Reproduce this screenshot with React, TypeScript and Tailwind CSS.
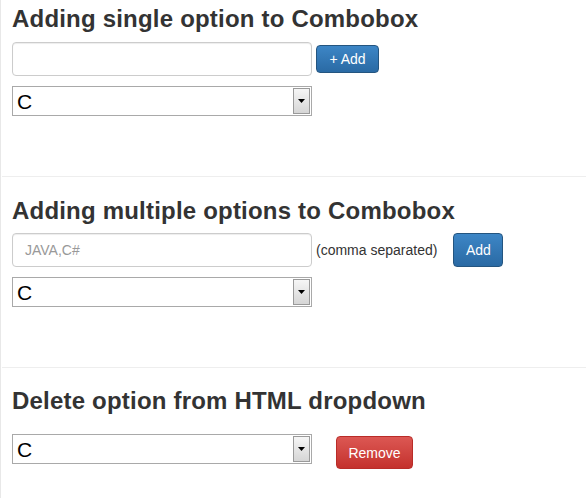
import React from "react";

function FakeSelect() {
  return (
    <div className="flex h-[30px] w-[300px] items-stretch border border-[#a9a9a9] bg-white">
      <div className="flex flex-1 items-center pl-[4px] text-[21px] leading-none text-black">C</div>
      <div className="m-[1px] flex w-[17px] items-center justify-center border border-[#9a9a9a] bg-gradient-to-b from-[#f6f6f6] to-[#d6d6d6]">
        <svg width="7" height="4" viewBox="0 0 7 4">
          <polygon points="0,0 7,0 3.5,4" fill="#000" />
        </svg>
      </div>
    </div>
  );
}

export default function App() {
  return (
    <div className="min-h-[498px] w-[586px] border-l border-[#e8e8e8] bg-white pl-[1px] font-['Liberation_Sans',Arial,sans-serif] text-[#333]">
      {/* Section 1 */}
      <section className="pl-[10px] pt-[6px] pb-[60px]">
        <h3 className="text-[24px] font-bold leading-[26px] tracking-[0.2px]">Adding single option to Combobox</h3>
        <div className="mt-[10px] flex items-center gap-[4px]">
          <div className="h-[34px] w-[300px] rounded-[4px] border border-[#ccc] bg-white shadow-[inset_0_1px_1px_rgba(0,0,0,0.075)]" />
          <button className="h-[28px] w-[63px] rounded-[4px] border border-[#245580] bg-gradient-to-b from-[#3d86c6] to-[#2a6aa4] text-[14px] leading-none text-white">
            + Add
          </button>
        </div>
        <div className="mt-[10px]">
          <FakeSelect />
        </div>
      </section>
      <hr className="border-0 border-t border-[#eee]" />

      {/* Section 2 */}
      <section className="pl-[10px] pt-[21px] pb-[60px]">
        <h3 className="text-[24px] font-bold leading-[26px] tracking-[0.2px]">Adding multiple options to Combobox</h3>
        <div className="mt-[9px] flex items-center">
          <div className="flex h-[34px] w-[300px] items-center rounded-[4px] border border-[#ccc] bg-white px-[12px] text-[14px] text-[#999] shadow-[inset_0_1px_1px_rgba(0,0,0,0.075)]">
            JAVA,C#
          </div>
          <span className="ml-[4px] text-[14px]">(comma separated)</span>
          <button className="ml-[16px] h-[34px] w-[50px] rounded-[4px] border border-[#245580] bg-gradient-to-b from-[#3d86c6] to-[#2a6aa4] text-[14px] leading-none text-white">
            Add
          </button>
        </div>
        <div className="mt-[10px]">
          <FakeSelect />
        </div>
      </section>
      <hr className="border-0 border-t border-[#eee]" />

      {/* Section 3 */}
      <section className="pl-[10px] pt-[20px]">
        <h3 className="text-[24px] font-bold leading-[26px] tracking-[0.2px]">Delete option from HTML dropdown</h3>
        <div className="mt-[20px] flex items-start">
          <FakeSelect />
          <button className="ml-[24px] mt-[2px] h-[33px] w-[77px] rounded-[4px] border border-[#b92c28] bg-gradient-to-b from-[#dc5753] to-[#c4302c] text-[14px] leading-none text-white">
            Remove
          </button>
        </div>
      </section>
    </div>
  );
}
